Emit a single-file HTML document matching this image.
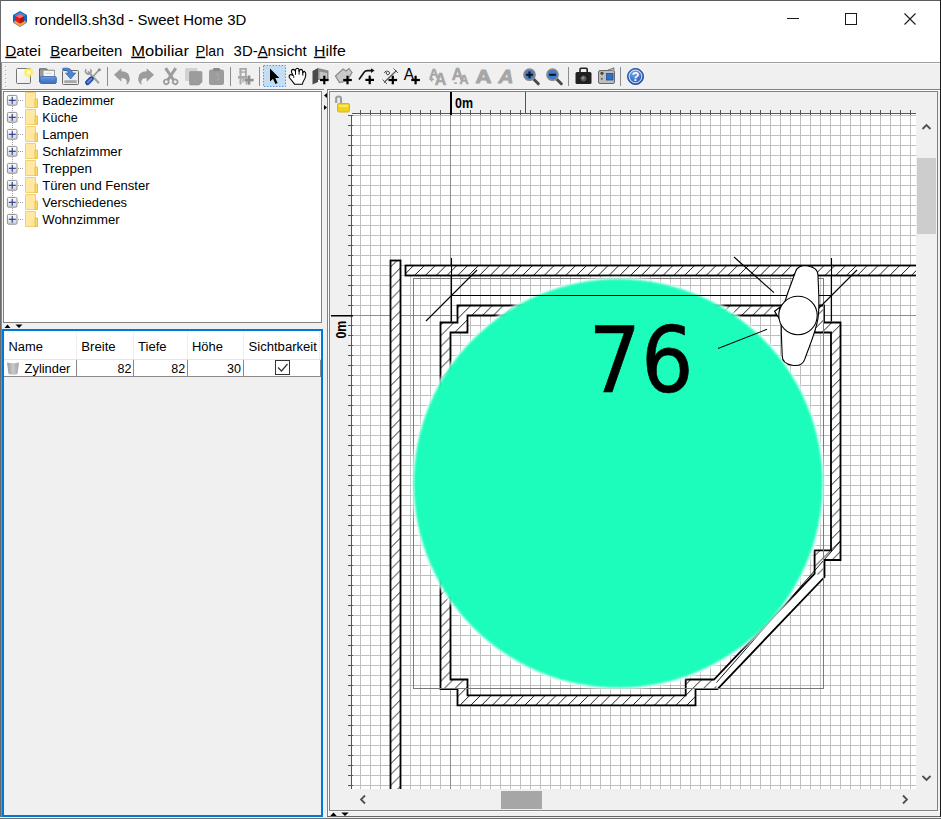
<!DOCTYPE html>
<html lang="de"><head><meta charset="utf-8"><title>rondell3.sh3d - Sweet Home 3D</title>
<style>
html,body{margin:0;padding:0;background:#f0f0f0;overflow:hidden;width:941px;height:819px}
svg{display:block;position:absolute;left:0;top:0}
text{white-space:pre}
</style></head><body>
<svg width="941" height="819" viewBox="0 0 941 819">
<rect x="0" y="0" width="941" height="819" fill="#f0f0f0" />
<rect x="0" y="0" width="941" height="63" fill="#ffffff" />
<rect x="0" y="62" width="941" height="1" fill="#a0a0a0" />
<rect x="0" y="63" width="941" height="1" fill="#f8f8f8" />
<g id="appicon" transform="translate(13,11)"><polygon points="7,0 14,4 14,11.5 7,16 0,11.5 0,4" fill="#1565b8"/><polygon points="7,1.2 12.8,4.6 7,8 1.2,4.6" fill="#3b8ee0"/><polygon points="0,11 7,15.8 14,11 7,7.5" fill="#f2a03c"/><polygon points="7,3 11,5.2 11,10.2 7,12.6 3,10.2 3,5.2" fill="#e8161b"/><polygon points="7,3 11,5.2 7,7.4 3,5.2" fill="#ff6a6a"/><polygon points="7,7.4 11,5.2 11,10.2 7,12.6" fill="#b80f14"/></g>
<text x="34.4" y="24.5" font-family='"Liberation Sans", sans-serif' font-size="15" fill="#000" textLength="212" lengthAdjust="spacingAndGlyphs" >rondell3.sh3d - Sweet Home 3D</text>
<rect x="787" y="18" width="12" height="1" fill="#1a1a1a" />
<rect x="845.5" y="13.5" width="11" height="11" fill="none" stroke="#1a1a1a" stroke-width="1"/>
<path d="M904.5 13.5 L915.5 24.5 M915.5 13.5 L904.5 24.5" stroke="#1a1a1a" stroke-width="1.1" fill="none"/>
<text x="5.3" y="55.7" font-family='"Liberation Sans", sans-serif' font-size="15" fill="#000" textLength="35.7" lengthAdjust="spacingAndGlyphs" ><tspan text-decoration="underline">D</tspan>atei</text>
<text x="50.300000000000004" y="55.7" font-family='"Liberation Sans", sans-serif' font-size="15" fill="#000" textLength="72.0" lengthAdjust="spacingAndGlyphs" ><tspan text-decoration="underline">B</tspan>earbeiten</text>
<text x="131.2" y="55.7" font-family='"Liberation Sans", sans-serif' font-size="15" fill="#000" textLength="57.8" lengthAdjust="spacingAndGlyphs" ><tspan text-decoration="underline">M</tspan>obiliar</text>
<text x="195.79999999999998" y="55.7" font-family='"Liberation Sans", sans-serif' font-size="15" fill="#000" textLength="28.2" lengthAdjust="spacingAndGlyphs" ><tspan text-decoration="underline">P</tspan>lan</text>
<text x="233.6" y="55.7" font-family='"Liberation Sans", sans-serif' font-size="15" fill="#000" textLength="73.0" lengthAdjust="spacingAndGlyphs" >3D-<tspan text-decoration="underline">A</tspan>nsicht</text>
<text x="314.0" y="55.7" font-family='"Liberation Sans", sans-serif' font-size="15" fill="#000" textLength="31.8" lengthAdjust="spacingAndGlyphs" ><tspan text-decoration="underline">H</tspan>ilfe</text>
<rect x="5" y="66" width="1" height="1" fill="#a8a8a8" />
<rect x="6" y="67" width="1" height="1" fill="#ffffff" />
<rect x="5" y="70" width="1" height="1" fill="#a8a8a8" />
<rect x="6" y="71" width="1" height="1" fill="#ffffff" />
<rect x="5" y="74" width="1" height="1" fill="#a8a8a8" />
<rect x="6" y="75" width="1" height="1" fill="#ffffff" />
<rect x="5" y="78" width="1" height="1" fill="#a8a8a8" />
<rect x="6" y="79" width="1" height="1" fill="#ffffff" />
<rect x="5" y="82" width="1" height="1" fill="#a8a8a8" />
<rect x="6" y="83" width="1" height="1" fill="#ffffff" />
<rect x="5" y="86" width="1" height="1" fill="#a8a8a8" />
<rect x="6" y="87" width="1" height="1" fill="#ffffff" />
<rect x="107" y="67" width="1" height="19" fill="#8c8c8c" />
<rect x="230" y="67" width="1" height="19" fill="#8c8c8c" />
<rect x="259" y="67" width="1" height="19" fill="#8c8c8c" />
<rect x="568" y="67" width="1" height="19" fill="#8c8c8c" />
<rect x="620" y="67" width="1" height="19" fill="#8c8c8c" />
<defs><radialGradient id="glow"><stop offset="0" stop-color="#ffffff"/><stop offset="0.22" stop-color="#fffbd0"/><stop offset="0.6" stop-color="#ffee3a"/><stop offset="1" stop-color="#ffee3a" stop-opacity="0"/></radialGradient><linearGradient id="blueg" x1="0" y1="0" x2="0" y2="1"><stop offset="0" stop-color="#86b2ea"/><stop offset="0.25" stop-color="#5a8cd6"/><stop offset="1" stop-color="#3d6dbc"/></linearGradient><linearGradient id="pageg" x1="0" y1="0" x2="1" y2="1"><stop offset="0" stop-color="#fbfbfb"/><stop offset="1" stop-color="#ececec"/></linearGradient><radialGradient id="helpg" cx="0.4" cy="0.3" r="0.8"><stop offset="0" stop-color="#6fa2e6"/><stop offset="1" stop-color="#1c4fa8"/></radialGradient></defs>
<rect x="16.5" y="68.5" width="14" height="15" rx="1" fill="url(#pageg)" stroke="#747474"/>
<circle cx="28.7" cy="72.4" r="5.2" fill="url(#glow)"/>
<path d="M39.5 82 V68.8 H46.5 L47.8 70.3 H54.5 V78" fill="#9a9a9a" stroke="#5e5e5e"/>
<rect x="43.3" y="70.6" width="11" height="7" fill="#f6f6f6" stroke="#a8a8a8" stroke-width="0.6"/>
<rect x="45.5" y="72.8" width="6" height="1" fill="#d0d0d0"/>
<rect x="40" y="76.6" width="16.3" height="6.9" rx="1.3" fill="url(#blueg)" stroke="#3563ae" stroke-width="0.9"/>
<rect x="62.5" y="70.5" width="16" height="14" rx="1" fill="#ececec" stroke="#6a6a6a"/>
<rect x="64.3" y="80.2" width="12.4" height="2.8" fill="#a8a8a8"/>
<path d="M62.8 68.3 Q71.5 66.8 72.6 73 H75.6 L70.6 79 L65.6 73 H68.6 Q68 69.8 62.8 70.4 Z" fill="#4a86d0" stroke="#2f62aa" stroke-width="0.7"/>
<path d="M99 70 L90 80" stroke="#9a9a9a" stroke-width="1.8" stroke-linecap="round"/>
<path d="M88.5 72 L98.3 82.6" stroke="#a2a2a2" stroke-width="2.2" stroke-linecap="round"/>
<path d="M86.3 69.2 a2.8 2.8 0 1 0 4 0" fill="none" stroke="#9a9a9a" stroke-width="1.5"/>
<path d="M91.3 78.8 L87.6 82.6" stroke="#24469a" stroke-width="5" stroke-linecap="round"/>
<path d="M91.2 79 L87.8 82.4" stroke="#5a88d8" stroke-width="2.2" stroke-linecap="round"/>
<circle cx="99.3" cy="69.7" r="1.5" fill="#8a8a8a"/>
<path d="M0 6.5 L7.3 0 V3 Q15.8 3 15.8 10.5 Q15.8 14.5 12.3 16.6 Q13.3 13 12 11.3 Q10.6 9.8 7.3 10 V13.6 Z" transform="translate(114,68.2)" fill="#9c9c9c"/>
<path d="M0 6.5 L7.3 0 V3 Q15.8 3 15.8 10.5 Q15.8 14.5 12.3 16.6 Q13.3 13 12 11.3 Q10.6 9.8 7.3 10 V13.6 Z" transform="translate(154,68.2) scale(-1,1)" fill="#9c9c9c"/>
<g stroke="#9c9c9c" fill="none"><path d="M165.6 68.2 L173.6 80 M175.8 68.2 L167.8 80" stroke-width="3"/><ellipse cx="166.3" cy="81.8" rx="2.4" ry="2.3" stroke-width="1.7" transform="rotate(-30 166.3 81.8)"/><ellipse cx="175.2" cy="81.8" rx="2.4" ry="2.3" stroke-width="1.7" transform="rotate(30 175.2 81.8)"/></g>
<rect x="185" y="68" width="12.5" height="13" rx="1" fill="#d2d2d2"/>
<path d="M190.5 71.5 H201 Q202 71.5 202 72.5 V82 L199 85 H190.5 Q189.5 85 189.5 84 V72.5 Q189.5 71.5 190.5 71.5 Z" fill="#9c9c9c" stroke="#909090" stroke-width="0.6"/>
<rect x="209" y="69.5" width="15" height="15.5" rx="2" fill="#9c9c9c"/>
<rect x="213" y="68" width="7" height="3" rx="1" fill="#8a8a8a"/>
<path d="M216 73 Q220 76 218 81" stroke="#a9a9a9" stroke-width="1.3" fill="none"/>
<g fill="#a9a9a9"><rect x="239.5" y="68" width="2" height="16.5"/><rect x="239.5" y="68" width="7" height="1.8"/><rect x="245" y="68" width="1.8" height="9"/><rect x="239.5" y="71.3" width="7" height="1.5"/><rect x="238" y="76" width="9.5" height="2.6"/><rect x="245.6" y="78" width="1.8" height="6.5"/><rect x="242.3" y="78" width="1.4" height="4.5"/></g>
<rect x="244.4" y="78.8" width="9.2" height="2.6" fill="#8f8f8f"/><rect x="247.7" y="75.5" width="2.6" height="9.2" fill="#8f8f8f"/>
<rect x="263.5" y="65.5" width="22" height="21" fill="#c3ddf5" stroke="#4a98ee" stroke-dasharray="1.5 1.5"/>
<path d="M270 68.5 V81.5 L273 78.8 L275.4 84 L277.6 83 L275.3 78 H279.3 Z" fill="#000"/>
<path d="M294.8 84.3 L289.3 77.5 Q288.6 75.2 290.8 74.6 L293.2 75.4 L291.6 72.5 Q291 69.6 293.2 69.4 Q295 69.4 295.5 71.5 L295.6 69.6 Q296 68.2 297.5 68.2 Q299 68.4 299 70 L299.2 71.5 Q299.6 69.3 301 69.4 Q302.6 69.6 302.7 71.5 L302.9 73 Q303.3 71.2 304.5 71.4 Q306 72 305.8 75 Q305.5 78 303.8 80.5 Q302.6 82.5 302.4 84.3 Z" fill="#fff" stroke="#000" stroke-width="1.1" stroke-linejoin="round"/>
<path d="M295.5 71.5 V74.8 M299.1 70 V74.6 M302.8 72 V75.6 M293.2 75.4 Q294.2 76.6 293.7 77.8" stroke="#000" stroke-width="1" fill="none"/>
<path d="M312.5 71 L318 68 V82 L312.5 84.5 Z" fill="#4a4a4a"/><path d="M318 68 L328.5 70.5 V80 H318 Z" fill="#8c8c8c"/><path d="M319.5 71.5 L327 73 V79 H319.5 Z" fill="#c4c4c4"/>
<rect x="320.0" y="78.9" width="8.6" height="2.2" fill="#000"/><rect x="323.2" y="75.7" width="2.2" height="8.6" fill="#000"/>
<path d="M335.5 76 L343 69 L346 71 L349 68.5 L352 72.5 L347 81 L339.5 82.5 Z" fill="#c9c9c9" stroke="#8a8a8a" stroke-width="1.2"/>
<rect x="343.2" y="78.9" width="8.6" height="2.2" fill="#000"/><rect x="346.4" y="75.7" width="2.2" height="8.6" fill="#000"/>
<path d="M359 79.5 L364.3 72 Q365.3 70.6 367.5 70.6 H372" fill="none" stroke="#111" stroke-width="1.6"/><path d="M371 68.2 L374.6 70.6 L371 73 Z" fill="#111"/>
<rect x="365.4" y="78.80000000000001" width="8.6" height="2.2" fill="#000"/><rect x="368.59999999999997" y="75.60000000000001" width="2.2" height="8.6" fill="#000"/>
<path d="M384 82.5 L396.5 70.5" stroke="#555" stroke-width="1.1"/><path d="M382.5 79.5 L387 84 M393.5 68.5 L398 73" stroke="#555" stroke-width="1"/><path d="M384.2 72.8 L386.3 70.6 M386.6 74.2 a1.6 1.6 0 1 0 2.4 -2.4 a1.6 1.6 0 1 0 -2.4 2.4" stroke="#444" stroke-width="1" fill="none"/>
<rect x="388.5" y="78.9" width="8.6" height="2.2" fill="#000"/><rect x="391.7" y="75.7" width="2.2" height="8.6" fill="#000"/>
<text x="403.8" y="80" font-family='"Liberation Sans",sans-serif' font-size="15.6" fill="#000">A</text>
<rect x="411.3" y="78.9" width="8.6" height="2.2" fill="#000"/><rect x="414.5" y="75.7" width="2.2" height="8.6" fill="#000"/>
<text x="429.3" y="78" font-size="13" stroke-width="0.5" font-family='"Liberation Sans",sans-serif' font-weight="bold" fill="#a6a6a6" stroke="#a6a6a6">A</text><text x="434.8" y="84.5" font-size="16" stroke-width="0.5" font-family='"Liberation Sans",sans-serif' font-weight="bold" fill="#a6a6a6" stroke="#a6a6a6">A</text>
<rect x="429.3" y="78.6" width="4.6" height="1.5" fill="#a6a6a6"/><rect x="430.9" y="77" width="1.5" height="4.6" fill="#a6a6a6"/>
<text x="451.8" y="80" font-size="16" stroke-width="0.5" font-family='"Liberation Sans",sans-serif' font-weight="bold" fill="#a6a6a6" stroke="#a6a6a6">A</text><text x="459.6" y="84.3" font-size="12.5" stroke-width="0.5" font-family='"Liberation Sans",sans-serif' font-weight="bold" fill="#a6a6a6" stroke="#a6a6a6">A</text>
<rect x="454" y="82.3" width="3" height="1.5" fill="#a6a6a6"/>
<text x="475.6" y="82.6" font-size="19" stroke-width="1" font-family='"Liberation Sans",sans-serif' font-weight="bold" fill="#a6a6a6" stroke="#a6a6a6" textLength="16" lengthAdjust="spacingAndGlyphs">A</text>
<text x="498.5" y="82.6" font-size="19" stroke-width="0.8" font-family='"Liberation Sans",sans-serif' font-weight="bold" fill="#a6a6a6" stroke="#a6a6a6" font-style="italic" textLength="15" lengthAdjust="spacingAndGlyphs">A</text>
<path d="M533 78.5 L538.3 83.8" stroke="#4a4a4a" stroke-width="3" stroke-linecap="round"/>
<circle cx="529.5" cy="74.7" r="5.6" fill="#3f7cc8" stroke="#8a8a8a" stroke-width="1.6"/>
<rect x="526.2" y="73.8" width="6.6" height="2" fill="#111"/>
<rect x="528.5" y="71.5" width="2" height="6.6" fill="#111"/>
<path d="M556 78.5 L561.3 83.8" stroke="#4a4a4a" stroke-width="3" stroke-linecap="round"/>
<circle cx="552.5" cy="74.7" r="5.6" fill="#3f7cc8" stroke="#8a8a8a" stroke-width="1.6"/>
<rect x="549.2" y="73.8" width="6.6" height="2" fill="#111"/>
<rect x="575.5" y="72" width="16" height="12" rx="1.5" fill="#222"/><path d="M580 72 V69.5 Q580 68.3 581.2 68.3 H586 Q587.2 68.3 587.2 69.5 V72" fill="none" stroke="#222" stroke-width="1.6"/><circle cx="583.5" cy="78.5" r="3.8" fill="#555" stroke="#111"/><circle cx="583" cy="78" r="1.5" fill="#8a8a8a"/>
<rect x="598.5" y="70.5" width="16" height="13" rx="1.5" fill="#bdbdbd" stroke="#6a6a6a"/><rect x="606.5" y="73.5" width="6.5" height="6.5" fill="#2f6fc4" stroke="#1d4f9a" stroke-width="0.8"/><circle cx="602" cy="73.3" r="2.1" fill="#4a4a4a" stroke="#e0e0e0" stroke-width="0.6"/><circle cx="601.8" cy="78.8" r="1.1" fill="#6a6a6a"/><path d="M608 70 L614 67.8 V70.5" fill="#bdbdbd" stroke="#6a6a6a" stroke-width="0.8"/>
<circle cx="635.5" cy="76.5" r="8" fill="url(#helpg)" stroke="#1c4a9c" stroke-width="1"/><circle cx="635.5" cy="76.5" r="6.3" fill="none" stroke="#dfe9f8" stroke-width="1"/>
<text x="635.5" y="81.2" text-anchor="middle" font-family='"Liberation Sans",sans-serif' font-weight="bold" font-size="12.5" fill="#fff">?</text>
<rect x="1" y="89" width="323" height="1" fill="#828282" />
<rect x="1" y="89" width="1" height="235" fill="#828282" />
<rect x="2" y="90" width="322" height="1" fill="#ffffff" />
<rect x="3" y="91" width="319" height="232" fill="#ffffff" />
<rect x="3.5" y="91.5" width="318" height="231" fill="none" stroke="#828282"/>
<defs><linearGradient id="pg" x1="0" y1="0" x2="0" y2="1"><stop offset="0" stop-color="#ffffff"/><stop offset="1" stop-color="#d4d4d4"/></linearGradient></defs>
<rect x="18" y="100" width="1" height="1" fill="#9a9a9a" />
<rect x="20" y="100" width="1" height="1" fill="#9a9a9a" />
<rect x="22" y="100" width="1" height="1" fill="#9a9a9a" />
<rect x="12" y="106" width="1" height="1" fill="#9a9a9a" />
<rect x="12" y="108" width="1" height="1" fill="#9a9a9a" />
<rect x="12" y="110" width="1" height="1" fill="#9a9a9a" />
<rect x="7.4" y="95.4" width="9.6" height="9.8" rx="1.3" fill="url(#pg)" stroke="#8e8e8e"/>
<rect x="8.8" y="99.75" width="7" height="1.15" fill="#2a3c96" />
<rect x="11.65" y="96.8" width="1.15" height="7" fill="#2a3c96" />
<g transform="translate(25,92)"><path d="M0.5 0.5 H10.5 V15.5 H0.5 Z" fill="#ffe9a2" stroke="#f0cf75" stroke-width="1"/><path d="M10 7 H12.5 V15.5 H10 Z" fill="#ffd968" stroke="#e8bf52" stroke-width="1"/></g>
<text x="42.3" y="104.6" font-family='"Liberation Sans", sans-serif' font-size="12.5" fill="#000" textLength="72.0" lengthAdjust="spacingAndGlyphs" >Badezimmer</text>
<rect x="18" y="117" width="1" height="1" fill="#9a9a9a" />
<rect x="20" y="117" width="1" height="1" fill="#9a9a9a" />
<rect x="22" y="117" width="1" height="1" fill="#9a9a9a" />
<rect x="12" y="123" width="1" height="1" fill="#9a9a9a" />
<rect x="12" y="125" width="1" height="1" fill="#9a9a9a" />
<rect x="12" y="127" width="1" height="1" fill="#9a9a9a" />
<rect x="7.4" y="112.4" width="9.6" height="9.8" rx="1.3" fill="url(#pg)" stroke="#8e8e8e"/>
<rect x="8.8" y="116.75" width="7" height="1.15" fill="#2a3c96" />
<rect x="11.65" y="113.8" width="1.15" height="7" fill="#2a3c96" />
<g transform="translate(25,109)"><path d="M0.5 0.5 H10.5 V15.5 H0.5 Z" fill="#ffe9a2" stroke="#f0cf75" stroke-width="1"/><path d="M10 7 H12.5 V15.5 H10 Z" fill="#ffd968" stroke="#e8bf52" stroke-width="1"/></g>
<text x="42.3" y="121.6" font-family='"Liberation Sans", sans-serif' font-size="12.5" fill="#000" textLength="35.3" lengthAdjust="spacingAndGlyphs" >Küche</text>
<rect x="18" y="134" width="1" height="1" fill="#9a9a9a" />
<rect x="20" y="134" width="1" height="1" fill="#9a9a9a" />
<rect x="22" y="134" width="1" height="1" fill="#9a9a9a" />
<rect x="12" y="140" width="1" height="1" fill="#9a9a9a" />
<rect x="12" y="142" width="1" height="1" fill="#9a9a9a" />
<rect x="12" y="144" width="1" height="1" fill="#9a9a9a" />
<rect x="7.4" y="129.4" width="9.6" height="9.8" rx="1.3" fill="url(#pg)" stroke="#8e8e8e"/>
<rect x="8.8" y="133.75" width="7" height="1.15" fill="#2a3c96" />
<rect x="11.65" y="130.8" width="1.15" height="7" fill="#2a3c96" />
<g transform="translate(25,126)"><path d="M0.5 0.5 H10.5 V15.5 H0.5 Z" fill="#ffe9a2" stroke="#f0cf75" stroke-width="1"/><path d="M10 7 H12.5 V15.5 H10 Z" fill="#ffd968" stroke="#e8bf52" stroke-width="1"/></g>
<text x="42.3" y="138.6" font-family='"Liberation Sans", sans-serif' font-size="12.5" fill="#000" textLength="46.4" lengthAdjust="spacingAndGlyphs" >Lampen</text>
<rect x="18" y="151" width="1" height="1" fill="#9a9a9a" />
<rect x="20" y="151" width="1" height="1" fill="#9a9a9a" />
<rect x="22" y="151" width="1" height="1" fill="#9a9a9a" />
<rect x="12" y="157" width="1" height="1" fill="#9a9a9a" />
<rect x="12" y="159" width="1" height="1" fill="#9a9a9a" />
<rect x="12" y="161" width="1" height="1" fill="#9a9a9a" />
<rect x="7.4" y="146.4" width="9.6" height="9.8" rx="1.3" fill="url(#pg)" stroke="#8e8e8e"/>
<rect x="8.8" y="150.75" width="7" height="1.15" fill="#2a3c96" />
<rect x="11.65" y="147.8" width="1.15" height="7" fill="#2a3c96" />
<g transform="translate(25,143)"><path d="M0.5 0.5 H10.5 V15.5 H0.5 Z" fill="#ffe9a2" stroke="#f0cf75" stroke-width="1"/><path d="M10 7 H12.5 V15.5 H10 Z" fill="#ffd968" stroke="#e8bf52" stroke-width="1"/></g>
<text x="42.3" y="155.6" font-family='"Liberation Sans", sans-serif' font-size="12.5" fill="#000" textLength="79.8" lengthAdjust="spacingAndGlyphs" >Schlafzimmer</text>
<rect x="18" y="168" width="1" height="1" fill="#9a9a9a" />
<rect x="20" y="168" width="1" height="1" fill="#9a9a9a" />
<rect x="22" y="168" width="1" height="1" fill="#9a9a9a" />
<rect x="12" y="174" width="1" height="1" fill="#9a9a9a" />
<rect x="12" y="176" width="1" height="1" fill="#9a9a9a" />
<rect x="12" y="178" width="1" height="1" fill="#9a9a9a" />
<rect x="7.4" y="163.4" width="9.6" height="9.8" rx="1.3" fill="url(#pg)" stroke="#8e8e8e"/>
<rect x="8.8" y="167.75" width="7" height="1.15" fill="#2a3c96" />
<rect x="11.65" y="164.8" width="1.15" height="7" fill="#2a3c96" />
<g transform="translate(25,160)"><path d="M0.5 0.5 H10.5 V15.5 H0.5 Z" fill="#ffe9a2" stroke="#f0cf75" stroke-width="1"/><path d="M10 7 H12.5 V15.5 H10 Z" fill="#ffd968" stroke="#e8bf52" stroke-width="1"/></g>
<text x="42.3" y="172.6" font-family='"Liberation Sans", sans-serif' font-size="12.5" fill="#000" textLength="49.6" lengthAdjust="spacingAndGlyphs" >Treppen</text>
<rect x="18" y="185" width="1" height="1" fill="#9a9a9a" />
<rect x="20" y="185" width="1" height="1" fill="#9a9a9a" />
<rect x="22" y="185" width="1" height="1" fill="#9a9a9a" />
<rect x="12" y="191" width="1" height="1" fill="#9a9a9a" />
<rect x="12" y="193" width="1" height="1" fill="#9a9a9a" />
<rect x="12" y="195" width="1" height="1" fill="#9a9a9a" />
<rect x="7.4" y="180.4" width="9.6" height="9.8" rx="1.3" fill="url(#pg)" stroke="#8e8e8e"/>
<rect x="8.8" y="184.75" width="7" height="1.15" fill="#2a3c96" />
<rect x="11.65" y="181.8" width="1.15" height="7" fill="#2a3c96" />
<g transform="translate(25,177)"><path d="M0.5 0.5 H10.5 V15.5 H0.5 Z" fill="#ffe9a2" stroke="#f0cf75" stroke-width="1"/><path d="M10 7 H12.5 V15.5 H10 Z" fill="#ffd968" stroke="#e8bf52" stroke-width="1"/></g>
<text x="42.3" y="189.6" font-family='"Liberation Sans", sans-serif' font-size="12.5" fill="#000" textLength="107.3" lengthAdjust="spacingAndGlyphs" >Türen und Fenster</text>
<rect x="18" y="202" width="1" height="1" fill="#9a9a9a" />
<rect x="20" y="202" width="1" height="1" fill="#9a9a9a" />
<rect x="22" y="202" width="1" height="1" fill="#9a9a9a" />
<rect x="12" y="208" width="1" height="1" fill="#9a9a9a" />
<rect x="12" y="210" width="1" height="1" fill="#9a9a9a" />
<rect x="12" y="212" width="1" height="1" fill="#9a9a9a" />
<rect x="7.4" y="197.4" width="9.6" height="9.8" rx="1.3" fill="url(#pg)" stroke="#8e8e8e"/>
<rect x="8.8" y="201.75" width="7" height="1.15" fill="#2a3c96" />
<rect x="11.65" y="198.8" width="1.15" height="7" fill="#2a3c96" />
<g transform="translate(25,194)"><path d="M0.5 0.5 H10.5 V15.5 H0.5 Z" fill="#ffe9a2" stroke="#f0cf75" stroke-width="1"/><path d="M10 7 H12.5 V15.5 H10 Z" fill="#ffd968" stroke="#e8bf52" stroke-width="1"/></g>
<text x="42.3" y="206.6" font-family='"Liberation Sans", sans-serif' font-size="12.5" fill="#000" textLength="84.8" lengthAdjust="spacingAndGlyphs" >Verschiedenes</text>
<rect x="18" y="219" width="1" height="1" fill="#9a9a9a" />
<rect x="20" y="219" width="1" height="1" fill="#9a9a9a" />
<rect x="22" y="219" width="1" height="1" fill="#9a9a9a" />
<rect x="7.4" y="214.4" width="9.6" height="9.8" rx="1.3" fill="url(#pg)" stroke="#8e8e8e"/>
<rect x="8.8" y="218.75" width="7" height="1.15" fill="#2a3c96" />
<rect x="11.65" y="215.8" width="1.15" height="7" fill="#2a3c96" />
<g transform="translate(25,211)"><path d="M0.5 0.5 H10.5 V15.5 H0.5 Z" fill="#ffe9a2" stroke="#f0cf75" stroke-width="1"/><path d="M10 7 H12.5 V15.5 H10 Z" fill="#ffd968" stroke="#e8bf52" stroke-width="1"/></g>
<text x="42.3" y="223.6" font-family='"Liberation Sans", sans-serif' font-size="12.5" fill="#000" textLength="77.3" lengthAdjust="spacingAndGlyphs" >Wohnzimmer</text>
<polygon points="4.5,328 7.5,324.5 10.5,328" fill="#000"/>
<polygon points="15.5,324.5 22.5,324.5 19,328" fill="#000"/>
<rect x="2" y="329" width="321" height="488" fill="#0078d7" />
<rect x="4" y="331" width="317" height="484" fill="#f0f0f0" />
<rect x="4" y="331" width="317" height="28" fill="#ffffff" />
<rect x="4" y="359" width="317" height="1" fill="#e5e5e5" />
<rect x="4" y="360" width="317" height="16" fill="#ffffff" />
<rect x="4" y="376" width="317" height="1" fill="#8a8a8a" />
<rect x="76" y="360" width="1" height="17" fill="#8a8a8a" />
<rect x="133" y="360" width="1" height="17" fill="#8a8a8a" />
<rect x="187" y="360" width="1" height="17" fill="#8a8a8a" />
<rect x="243" y="360" width="1" height="17" fill="#8a8a8a" />
<rect x="320" y="360" width="1" height="17" fill="#8a8a8a" />
<rect x="76" y="332" width="1" height="1" fill="#e0e0e0" />
<rect x="76" y="334" width="1" height="1" fill="#e0e0e0" />
<rect x="76" y="336" width="1" height="1" fill="#e0e0e0" />
<rect x="76" y="338" width="1" height="1" fill="#e0e0e0" />
<rect x="76" y="340" width="1" height="1" fill="#e0e0e0" />
<rect x="76" y="342" width="1" height="1" fill="#e0e0e0" />
<rect x="76" y="344" width="1" height="1" fill="#e0e0e0" />
<rect x="76" y="346" width="1" height="1" fill="#e0e0e0" />
<rect x="76" y="348" width="1" height="1" fill="#e0e0e0" />
<rect x="76" y="350" width="1" height="1" fill="#e0e0e0" />
<rect x="76" y="352" width="1" height="1" fill="#e0e0e0" />
<rect x="76" y="354" width="1" height="1" fill="#e0e0e0" />
<rect x="76" y="356" width="1" height="1" fill="#e0e0e0" />
<rect x="76" y="358" width="1" height="1" fill="#e0e0e0" />
<rect x="133" y="332" width="1" height="1" fill="#e0e0e0" />
<rect x="133" y="334" width="1" height="1" fill="#e0e0e0" />
<rect x="133" y="336" width="1" height="1" fill="#e0e0e0" />
<rect x="133" y="338" width="1" height="1" fill="#e0e0e0" />
<rect x="133" y="340" width="1" height="1" fill="#e0e0e0" />
<rect x="133" y="342" width="1" height="1" fill="#e0e0e0" />
<rect x="133" y="344" width="1" height="1" fill="#e0e0e0" />
<rect x="133" y="346" width="1" height="1" fill="#e0e0e0" />
<rect x="133" y="348" width="1" height="1" fill="#e0e0e0" />
<rect x="133" y="350" width="1" height="1" fill="#e0e0e0" />
<rect x="133" y="352" width="1" height="1" fill="#e0e0e0" />
<rect x="133" y="354" width="1" height="1" fill="#e0e0e0" />
<rect x="133" y="356" width="1" height="1" fill="#e0e0e0" />
<rect x="133" y="358" width="1" height="1" fill="#e0e0e0" />
<rect x="187" y="332" width="1" height="1" fill="#e0e0e0" />
<rect x="187" y="334" width="1" height="1" fill="#e0e0e0" />
<rect x="187" y="336" width="1" height="1" fill="#e0e0e0" />
<rect x="187" y="338" width="1" height="1" fill="#e0e0e0" />
<rect x="187" y="340" width="1" height="1" fill="#e0e0e0" />
<rect x="187" y="342" width="1" height="1" fill="#e0e0e0" />
<rect x="187" y="344" width="1" height="1" fill="#e0e0e0" />
<rect x="187" y="346" width="1" height="1" fill="#e0e0e0" />
<rect x="187" y="348" width="1" height="1" fill="#e0e0e0" />
<rect x="187" y="350" width="1" height="1" fill="#e0e0e0" />
<rect x="187" y="352" width="1" height="1" fill="#e0e0e0" />
<rect x="187" y="354" width="1" height="1" fill="#e0e0e0" />
<rect x="187" y="356" width="1" height="1" fill="#e0e0e0" />
<rect x="187" y="358" width="1" height="1" fill="#e0e0e0" />
<rect x="243" y="332" width="1" height="1" fill="#e0e0e0" />
<rect x="243" y="334" width="1" height="1" fill="#e0e0e0" />
<rect x="243" y="336" width="1" height="1" fill="#e0e0e0" />
<rect x="243" y="338" width="1" height="1" fill="#e0e0e0" />
<rect x="243" y="340" width="1" height="1" fill="#e0e0e0" />
<rect x="243" y="342" width="1" height="1" fill="#e0e0e0" />
<rect x="243" y="344" width="1" height="1" fill="#e0e0e0" />
<rect x="243" y="346" width="1" height="1" fill="#e0e0e0" />
<rect x="243" y="348" width="1" height="1" fill="#e0e0e0" />
<rect x="243" y="350" width="1" height="1" fill="#e0e0e0" />
<rect x="243" y="352" width="1" height="1" fill="#e0e0e0" />
<rect x="243" y="354" width="1" height="1" fill="#e0e0e0" />
<rect x="243" y="356" width="1" height="1" fill="#e0e0e0" />
<rect x="243" y="358" width="1" height="1" fill="#e0e0e0" />
<rect x="319" y="332" width="1" height="1" fill="#e0e0e0" />
<rect x="319" y="334" width="1" height="1" fill="#e0e0e0" />
<rect x="319" y="336" width="1" height="1" fill="#e0e0e0" />
<rect x="319" y="338" width="1" height="1" fill="#e0e0e0" />
<rect x="319" y="340" width="1" height="1" fill="#e0e0e0" />
<rect x="319" y="342" width="1" height="1" fill="#e0e0e0" />
<rect x="319" y="344" width="1" height="1" fill="#e0e0e0" />
<rect x="319" y="346" width="1" height="1" fill="#e0e0e0" />
<rect x="319" y="348" width="1" height="1" fill="#e0e0e0" />
<rect x="319" y="350" width="1" height="1" fill="#e0e0e0" />
<rect x="319" y="352" width="1" height="1" fill="#e0e0e0" />
<rect x="319" y="354" width="1" height="1" fill="#e0e0e0" />
<rect x="319" y="356" width="1" height="1" fill="#e0e0e0" />
<rect x="319" y="358" width="1" height="1" fill="#e0e0e0" />
<text x="8.5" y="350.7" font-family='"Liberation Sans", sans-serif' font-size="12.5" fill="#000" textLength="34.3" lengthAdjust="spacingAndGlyphs" >Name</text>
<text x="81.2" y="350.7" font-family='"Liberation Sans", sans-serif' font-size="12.5" fill="#000" textLength="34.5" lengthAdjust="spacingAndGlyphs" >Breite</text>
<text x="138" y="350.7" font-family='"Liberation Sans", sans-serif' font-size="12.5" fill="#000" textLength="28.5" lengthAdjust="spacingAndGlyphs" >Tiefe</text>
<text x="192" y="350.7" font-family='"Liberation Sans", sans-serif' font-size="12.5" fill="#000" textLength="30.9" lengthAdjust="spacingAndGlyphs" >Höhe</text>
<text x="248.5" y="350.7" font-family='"Liberation Sans", sans-serif' font-size="12.5" fill="#000" textLength="68.4" lengthAdjust="spacingAndGlyphs" >Sichtbarkeit</text>
<g transform="translate(7,362)"><defs><linearGradient id="cyl" x1="0" x2="1"><stop offset="0" stop-color="#9c9c9c"/><stop offset="0.5" stop-color="#c9c9c9"/><stop offset="1" stop-color="#a4a4a4"/></linearGradient></defs><path d="M0 0.5 Q6 2 12 0.5 L10.5 12 Q6 13.5 1.5 12 Z" fill="url(#cyl)"/></g>
<text x="24.6" y="373.2" font-family='"Liberation Sans", sans-serif' font-size="12.5" fill="#000" textLength="45.8" lengthAdjust="spacingAndGlyphs" >Zylinder</text>
<text x="131.5" y="373.2" font-family='"Liberation Sans", sans-serif' font-size="12.5" fill="#000" text-anchor="end">82</text>
<text x="185.2" y="373.2" font-family='"Liberation Sans", sans-serif' font-size="12.5" fill="#000" text-anchor="end">82</text>
<text x="240.9" y="373.2" font-family='"Liberation Sans", sans-serif' font-size="12.5" fill="#000" text-anchor="end">30</text>
<rect x="275.5" y="360.5" width="14" height="14" fill="#fff" stroke="#333"/>
<path d="M278 367.5 L281.5 371 L287.5 364" fill="none" stroke="#333" stroke-width="1.2"/>
<polygon points="327,93 327,98 324,95.5" fill="#000"/>
<polygon points="324,105 324,110 327,107.5" fill="#000"/>
<rect x="327" y="89" width="613" height="1" fill="#828282" />
<rect x="327" y="89" width="1" height="728" fill="#828282" />
<rect x="328" y="90" width="612" height="1" fill="#ffffff" />
<rect x="328" y="90" width="1" height="726" fill="#ffffff" />
<rect x="329.5" y="91.5" width="608" height="719" fill="none" stroke="#828282"/>
<rect x="328" y="811" width="612" height="1" fill="#fafafa" />
<rect x="352" y="114" width="564" height="675" fill="#ffffff" />
<defs>
<clipPath id="pc"><rect x="352" y="114" width="564" height="675"/></clipPath>
<pattern id="grid" x="360" y="115" width="10" height="10" patternUnits="userSpaceOnUse"><rect width="1" height="10" fill="#bfbfbf"/><rect width="10" height="1" fill="#bfbfbf"/></pattern>
<pattern id="hatch" x="-1.2" y="0" width="10.8" height="10.8" patternUnits="userSpaceOnUse"><rect width="10.8" height="10.8" fill="#fff"/><path d="M-5.4 5.4 L5.4 -5.4 M0 10.8 L10.8 0 M5.4 16.200000000000003 L16.200000000000003 5.4" stroke="#000" stroke-width="0.9" fill="none"/></pattern>
<filter id="blur" x="-5%" y="-5%" width="110%" height="110%"><feGaussianBlur stdDeviation="1.1"/></filter>
</defs>
<g clip-path="url(#pc)">
<rect x="352" y="114" width="564" height="675" fill="url(#grid)"/>
<rect x="450" y="114" width="1" height="675" fill="#8e8e8e"/>
<rect x="352" y="315" width="564" height="1" fill="#8e8e8e"/>
<rect x="390.5" y="260.5" width="10" height="540" fill="url(#hatch)" stroke="#000" stroke-width="1.8" stroke-linejoin="miter"/>
<rect x="405.5" y="265.5" width="520" height="10" fill="url(#hatch)" stroke="#000" stroke-width="1.8" stroke-linejoin="miter"/>
<path d="M457.5 305.5 H824 V322.5 H840.5 V560 H824.5 V577 L717.5 689 H695.5 V705.3 H457.5 V689 H440.5 V322.5 H457.5 Z M467.5 315.5 H814.5 V332.5 H831 V550.3 H814.6 V573.6 L714 679.5 H685.7 V695.3 H467.5 V679.5 H450.5 V332.5 H467.5 Z" fill="url(#hatch)" fill-rule="evenodd" stroke="none"/>
<path d="M824.5 577 L717.5 689 L714 679.5 L814.6 573.6 Z" fill="#fff" stroke="none"/>
<path d="M839.8 542 L823.6 560.4 L716.5 682.5" stroke="#000" stroke-width="0.9" fill="none"/>
<path d="M457.5 305.5 H824 V322.5 H840.5 V560 H824.5 V577 L717.5 689 H695.5 V705.3 H457.5 V689 H440.5 V322.5 H457.5 Z M467.5 315.5 H814.5 V332.5 H831 V550.3 H814.6 V573.6 L714 679.5 H685.7 V695.3 H467.5 V679.5 H450.5 V332.5 H467.5 Z" fill="none" stroke="#000" stroke-width="1.8" stroke-linejoin="miter"/>
<rect x="413.5" y="278.5" width="410" height="410" fill="none" stroke="#7a7a7a" stroke-width="1"/>
<circle cx="618.2" cy="483.4" r="205" fill="none" stroke="#fff" stroke-width="3" filter="url(#blur)" opacity="0.85"/>
<circle cx="618.2" cy="483.4" r="204.4" fill="#1cfdbb" filter="url(#blur)"/>
<path d="M451.5 258 V321.5 M831.5 258 V321.5 M451.5 295.5 H831.5 M426 321 L477 270 M806 321 L857 270" stroke="#000" stroke-width="1.1" fill="none"/>
<path d="M734 257 L774 292.7 M718 348.5 L767 329.3" stroke="#000" stroke-width="1.1" fill="none"/>
<g fill="#fff" stroke="#000" stroke-width="1.1"><path transform="translate(800.1,315.6) rotate(9)" d="M0 -50.3 C6 -50.3 10.6 -47.5 11.4 -42.5 C13.6 -30 18.1 -14 18.1 0 C18.1 14 13.6 30 11.4 42.5 C10.6 47.5 6 50.3 0 50.3 C-6 50.3 -10.6 47.5 -11.4 42.5 C-13.6 30 -18.1 14 -18.1 0 C-18.1 -14 -13.6 -30 -11.4 -42.5 C-10.6 -47.5 -6 -50.3 0 -50.3 Z"/><polygon points="774.6,311.3 779.6,307.5 779.2,318.5"/><circle cx="798" cy="315.5" r="19.2"/></g>
<text x="588.6" y="391.5" font-family='"DejaVu Sans Condensed","Liberation Sans",sans-serif' font-size="91" fill="#000" stroke="#000" stroke-width="0.6" textLength="105" lengthAdjust="spacingAndGlyphs">76</text>
</g>
<rect x="352" y="113" width="564" height="1" fill="#555555" />
<rect x="351" y="115" width="1" height="674" fill="#555555" />
<rect x="360" y="110" width="1" height="5" fill="#555555" />
<rect x="370" y="110" width="1" height="5" fill="#555555" />
<rect x="380" y="110" width="1" height="5" fill="#555555" />
<rect x="390" y="110" width="1" height="5" fill="#555555" />
<rect x="400" y="110" width="1" height="5" fill="#555555" />
<rect x="410" y="110" width="1" height="5" fill="#555555" />
<rect x="420" y="110" width="1" height="5" fill="#555555" />
<rect x="430" y="110" width="1" height="5" fill="#555555" />
<rect x="440" y="110" width="1" height="5" fill="#555555" />
<rect x="460" y="110" width="1" height="5" fill="#555555" />
<rect x="470" y="110" width="1" height="5" fill="#555555" />
<rect x="480" y="110" width="1" height="5" fill="#555555" />
<rect x="490" y="110" width="1" height="5" fill="#555555" />
<rect x="500" y="110" width="1" height="5" fill="#555555" />
<rect x="510" y="110" width="1" height="5" fill="#555555" />
<rect x="520" y="110" width="1" height="5" fill="#555555" />
<rect x="530" y="110" width="1" height="5" fill="#555555" />
<rect x="540" y="110" width="1" height="5" fill="#555555" />
<rect x="550" y="110" width="1" height="5" fill="#555555" />
<rect x="560" y="110" width="1" height="5" fill="#555555" />
<rect x="570" y="110" width="1" height="5" fill="#555555" />
<rect x="580" y="110" width="1" height="5" fill="#555555" />
<rect x="590" y="110" width="1" height="5" fill="#555555" />
<rect x="600" y="110" width="1" height="5" fill="#555555" />
<rect x="610" y="110" width="1" height="5" fill="#555555" />
<rect x="620" y="110" width="1" height="5" fill="#555555" />
<rect x="630" y="110" width="1" height="5" fill="#555555" />
<rect x="640" y="110" width="1" height="5" fill="#555555" />
<rect x="650" y="110" width="1" height="5" fill="#555555" />
<rect x="660" y="110" width="1" height="5" fill="#555555" />
<rect x="670" y="110" width="1" height="5" fill="#555555" />
<rect x="680" y="110" width="1" height="5" fill="#555555" />
<rect x="690" y="110" width="1" height="5" fill="#555555" />
<rect x="700" y="110" width="1" height="5" fill="#555555" />
<rect x="710" y="110" width="1" height="5" fill="#555555" />
<rect x="720" y="110" width="1" height="5" fill="#555555" />
<rect x="730" y="110" width="1" height="5" fill="#555555" />
<rect x="740" y="110" width="1" height="5" fill="#555555" />
<rect x="750" y="110" width="1" height="5" fill="#555555" />
<rect x="760" y="110" width="1" height="5" fill="#555555" />
<rect x="770" y="110" width="1" height="5" fill="#555555" />
<rect x="780" y="110" width="1" height="5" fill="#555555" />
<rect x="790" y="110" width="1" height="5" fill="#555555" />
<rect x="800" y="110" width="1" height="5" fill="#555555" />
<rect x="810" y="110" width="1" height="5" fill="#555555" />
<rect x="820" y="110" width="1" height="5" fill="#555555" />
<rect x="830" y="110" width="1" height="5" fill="#555555" />
<rect x="840" y="110" width="1" height="5" fill="#555555" />
<rect x="850" y="110" width="1" height="5" fill="#555555" />
<rect x="860" y="110" width="1" height="5" fill="#555555" />
<rect x="870" y="110" width="1" height="5" fill="#555555" />
<rect x="880" y="110" width="1" height="5" fill="#555555" />
<rect x="890" y="110" width="1" height="5" fill="#555555" />
<rect x="900" y="110" width="1" height="5" fill="#555555" />
<rect x="910" y="110" width="1" height="5" fill="#555555" />
<rect x="348" y="115" width="5" height="1" fill="#555555" />
<rect x="348" y="125" width="5" height="1" fill="#555555" />
<rect x="348" y="135" width="5" height="1" fill="#555555" />
<rect x="348" y="145" width="5" height="1" fill="#555555" />
<rect x="348" y="155" width="5" height="1" fill="#555555" />
<rect x="348" y="165" width="5" height="1" fill="#555555" />
<rect x="348" y="175" width="5" height="1" fill="#555555" />
<rect x="348" y="185" width="5" height="1" fill="#555555" />
<rect x="348" y="195" width="5" height="1" fill="#555555" />
<rect x="348" y="205" width="5" height="1" fill="#555555" />
<rect x="348" y="215" width="5" height="1" fill="#555555" />
<rect x="348" y="225" width="5" height="1" fill="#555555" />
<rect x="348" y="235" width="5" height="1" fill="#555555" />
<rect x="348" y="245" width="5" height="1" fill="#555555" />
<rect x="348" y="255" width="5" height="1" fill="#555555" />
<rect x="348" y="265" width="5" height="1" fill="#555555" />
<rect x="348" y="275" width="5" height="1" fill="#555555" />
<rect x="348" y="285" width="5" height="1" fill="#555555" />
<rect x="348" y="295" width="5" height="1" fill="#555555" />
<rect x="348" y="305" width="5" height="1" fill="#555555" />
<rect x="348" y="325" width="5" height="1" fill="#555555" />
<rect x="348" y="335" width="5" height="1" fill="#555555" />
<rect x="348" y="345" width="5" height="1" fill="#555555" />
<rect x="348" y="355" width="5" height="1" fill="#555555" />
<rect x="348" y="365" width="5" height="1" fill="#555555" />
<rect x="348" y="375" width="5" height="1" fill="#555555" />
<rect x="348" y="385" width="5" height="1" fill="#555555" />
<rect x="348" y="395" width="5" height="1" fill="#555555" />
<rect x="348" y="405" width="5" height="1" fill="#555555" />
<rect x="348" y="415" width="5" height="1" fill="#555555" />
<rect x="348" y="425" width="5" height="1" fill="#555555" />
<rect x="348" y="435" width="5" height="1" fill="#555555" />
<rect x="348" y="445" width="5" height="1" fill="#555555" />
<rect x="348" y="455" width="5" height="1" fill="#555555" />
<rect x="348" y="465" width="5" height="1" fill="#555555" />
<rect x="348" y="475" width="5" height="1" fill="#555555" />
<rect x="348" y="485" width="5" height="1" fill="#555555" />
<rect x="348" y="495" width="5" height="1" fill="#555555" />
<rect x="348" y="505" width="5" height="1" fill="#555555" />
<rect x="348" y="515" width="5" height="1" fill="#555555" />
<rect x="348" y="525" width="5" height="1" fill="#555555" />
<rect x="348" y="535" width="5" height="1" fill="#555555" />
<rect x="348" y="545" width="5" height="1" fill="#555555" />
<rect x="348" y="555" width="5" height="1" fill="#555555" />
<rect x="348" y="565" width="5" height="1" fill="#555555" />
<rect x="348" y="575" width="5" height="1" fill="#555555" />
<rect x="348" y="585" width="5" height="1" fill="#555555" />
<rect x="348" y="595" width="5" height="1" fill="#555555" />
<rect x="348" y="605" width="5" height="1" fill="#555555" />
<rect x="348" y="615" width="5" height="1" fill="#555555" />
<rect x="348" y="625" width="5" height="1" fill="#555555" />
<rect x="348" y="635" width="5" height="1" fill="#555555" />
<rect x="348" y="645" width="5" height="1" fill="#555555" />
<rect x="348" y="655" width="5" height="1" fill="#555555" />
<rect x="348" y="665" width="5" height="1" fill="#555555" />
<rect x="348" y="675" width="5" height="1" fill="#555555" />
<rect x="348" y="685" width="5" height="1" fill="#555555" />
<rect x="348" y="695" width="5" height="1" fill="#555555" />
<rect x="348" y="705" width="5" height="1" fill="#555555" />
<rect x="348" y="715" width="5" height="1" fill="#555555" />
<rect x="348" y="725" width="5" height="1" fill="#555555" />
<rect x="348" y="735" width="5" height="1" fill="#555555" />
<rect x="348" y="745" width="5" height="1" fill="#555555" />
<rect x="348" y="755" width="5" height="1" fill="#555555" />
<rect x="348" y="765" width="5" height="1" fill="#555555" />
<rect x="348" y="775" width="5" height="1" fill="#555555" />
<rect x="348" y="785" width="5" height="1" fill="#555555" />
<rect x="450" y="92" width="2" height="23" fill="#000" />
<rect x="331" y="315" width="22" height="1.5" fill="#000" />
<rect x="525" y="92" width="1" height="22" fill="#1a5fb4" />
<text x="455" y="107.5" font-family='"Liberation Sans", sans-serif' font-size="14.5" fill="#000" textLength="18" lengthAdjust="spacingAndGlyphs" font-weight="bold">0m</text>
<g transform="translate(345.5,338.6) rotate(-90)">
<text x="0" y="0" font-family='"Liberation Sans", sans-serif' font-size="14.5" fill="#000" textLength="18" lengthAdjust="spacingAndGlyphs" font-weight="bold">0m</text>
</g>
<g id="lock"><path d="M336.2 103 V98.5 Q336.2 96.5 338.5 96.5 Q341 96.5 341 98.5 V103" fill="none" stroke="#9aa0a0" stroke-width="2.2"/><rect x="337.5" y="103.5" width="12" height="8.5" rx="1.5" fill="#f3d21c" stroke="#d9b616"/><rect x="339" y="105" width="9" height="2" fill="#fbe96a"/></g>
<rect x="917" y="158" width="19" height="76" fill="#cdcdcd" />
<rect x="501" y="791" width="41" height="18" fill="#a6a6a6" />
<path d="M922.5 129 L926.5 125 L930.5 129" fill="none" stroke="#505050" stroke-width="1.8"/>
<path d="M922.5 776 L926.5 780 L930.5 776" fill="none" stroke="#505050" stroke-width="1.8"/>
<path d="M365 795.5 L361 799.5 L365 803.5" fill="none" stroke="#505050" stroke-width="1.8"/>
<path d="M903 795.5 L907 799.5 L903 803.5" fill="none" stroke="#505050" stroke-width="1.8"/>
<polygon points="330.3,816 333.5,812.6 336.7,816" fill="#000"/>
<polygon points="341.3,812.6 348.7,812.6 345,816" fill="#000"/>
<rect x="0" y="0" width="941" height="1" fill="#5c5c5c" />
<rect x="0" y="0" width="1" height="819" fill="#6a6a6a" />
<rect x="1" y="63" width="1" height="754" fill="#8a8a8a" />
<rect x="940" y="0" width="1" height="819" fill="#1c1c1c" />
<rect x="327" y="816" width="613" height="1" fill="#666666" />
<rect x="0" y="817" width="941" height="1" fill="#ececec" />
<rect x="0" y="818" width="941" height="1" fill="#707070" />
</svg>
</body></html>
